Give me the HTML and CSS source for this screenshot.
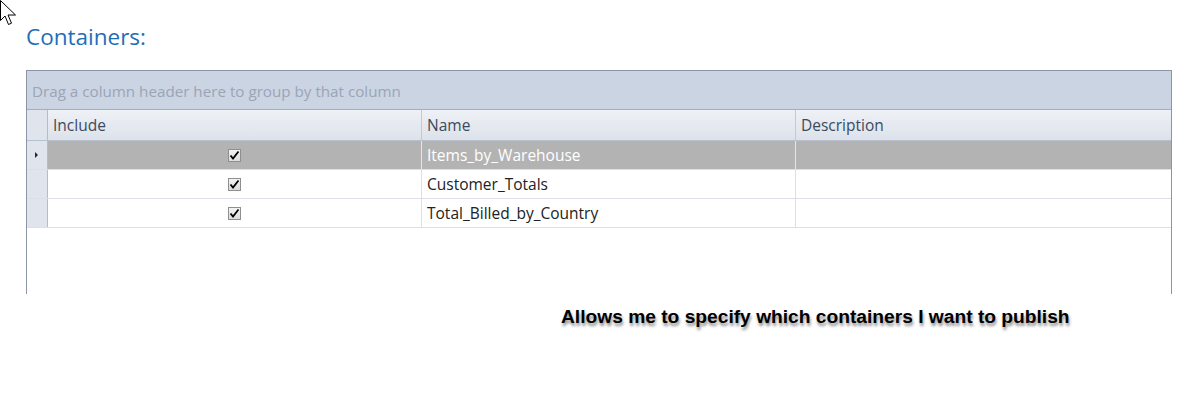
FILE: index.html
```html
<!DOCTYPE html>
<html>
<head>
<meta charset="utf-8">
<link rel="stylesheet" href="styles.css">
</head>
<body>
<svg class="cursor" width="18" height="26" viewBox="0 0 18 26">
  <path d="M0.5 0.5 L0.5 20.5 L5 16 L8.5 24.5 L11.5 23.2 L8 15 L15.5 15 Z" fill="#fff" stroke="#000" stroke-width="1"/>
</svg>
<div class="page">
  <h1 class="title">Containers:</h1>
  <div class="grid">
    <div class="group-panel">Drag a column header here to group by that column</div>
    <div class="row header">
      <div class="ind"></div>
      <div class="cell c1">Include</div>
      <div class="cell c2">Name</div>
      <div class="cell c3">Description</div>
    </div>
    <div class="row data selected">
      <div class="ind"><span class="arrow"></span></div>
      <div class="cell c1 check"><span class="cb"><svg width="11" height="11" viewBox="0 0 11 11"><path d="M1.5 5.5 L4 8.5 L9.5 1.5" fill="none" stroke="#000" stroke-width="1.8"/></svg></span></div>
      <div class="cell c2">Items_by_Warehouse</div>
      <div class="cell c3"></div>
    </div>
    <div class="row data">
      <div class="ind"></div>
      <div class="cell c1 check"><span class="cb"><svg width="11" height="11" viewBox="0 0 11 11"><path d="M1.5 5.5 L4 8.5 L9.5 1.5" fill="none" stroke="#000" stroke-width="1.8"/></svg></span></div>
      <div class="cell c2">Customer_Totals</div>
      <div class="cell c3"></div>
    </div>
    <div class="row data">
      <div class="ind"></div>
      <div class="cell c1 check"><span class="cb"><svg width="11" height="11" viewBox="0 0 11 11"><path d="M1.5 5.5 L4 8.5 L9.5 1.5" fill="none" stroke="#000" stroke-width="1.8"/></svg></span></div>
      <div class="cell c2">Total_Billed_by_Country</div>
      <div class="cell c3"></div>
    </div>
  </div>
  <p class="caption">Allows me to specify which containers I want to publish</p>
</div>
</body>
</html>
```
FILE: styles.css
```css
html, body {
  margin: 0;
  padding: 0;
  background: #fff;
  width: 1181px;
  height: 400px;
  overflow: hidden;
}
.cursor {
  position: absolute;
  left: 0;
  top: 0;
}
.page {
  padding: 22px 0 0 26px;
  font-family: "Open Sans", "Noto Sans", sans-serif;
}
.title {
  margin: 0;
  font-family: "Open Sans", sans-serif;
  font-weight: 400;
  font-size: 22.5px;
  line-height: 30px;
  color: #1d6fb8;
  height: 48px;
}
.grid {
  width: 1144px;
  height: 223px;
  border: 1px solid #8a96a6;
  border-bottom: none;
  background: #fff;
}
.group-panel {
  height: 38px;
  background: #cbd4e2;
  border-bottom: 1px solid #a3afc1;
  color: #9aa5b6;
  font-size: 15.2px;
  line-height: 41px;
  padding-left: 5px;
  white-space: nowrap;
}
.row {
  display: flex;
  height: 28px;
  border-bottom: 1px solid #dcdfe6;
}
.row.header {
  height: 30px;
  background: linear-gradient(#eef1f5, #dde2ea);
  border-bottom: 1px solid #b6c0cf;
  color: #3c4a5e;
}
.ind {
  width: 20px;
  flex: none;
  border-right: 1px solid #b3bccb;
  background: #e0e4ec;
  display: flex;
  align-items: center;
  justify-content: center;
}
.arrow {
  width: 0;
  height: 0;
  border-top: 3px solid transparent;
  border-bottom: 3px solid transparent;
  border-left: 3px solid #1e2a3a;
  margin-left: -2px;
}
.cell {
  font-size: 15.5px;
  line-height: 29px;
  padding-left: 5px;
  box-sizing: border-box;
  border-right: 1px solid #dcdfe6;
  white-space: nowrap;
  color: #222;
}
.header .cell {
  line-height: 31px;
  color: #3c4a5e;
  border-right: 1px solid #c3cad6;
}
.c1 { width: 374px; }
.c2 { width: 374px; }
.c3 { width: 375px; border-right: none; }
.header .c3 { border-right: none; }
.selected {
  background: #b3b3b3;
}
.selected .cell {
  color: #fff;
  border-right-color: #e6e6e6;
}
.check {
  display: flex;
  align-items: center;
  justify-content: center;
  padding-left: 0;
}
.cb {
  width: 11px;
  height: 11px;
  border: 1px solid #8f8f8f;
  background: linear-gradient(#f3f3f3, #dcdcdc);
  display: flex;
}
.caption {
  margin: 12px 0 0 535px;
  font-family: "Liberation Sans", Arial, sans-serif;
  font-weight: 700;
  font-size: 19.2px;
  color: #000;
  text-shadow: 1px 3px 3px rgba(0,0,0,0.45);
  white-space: nowrap;
}
```
